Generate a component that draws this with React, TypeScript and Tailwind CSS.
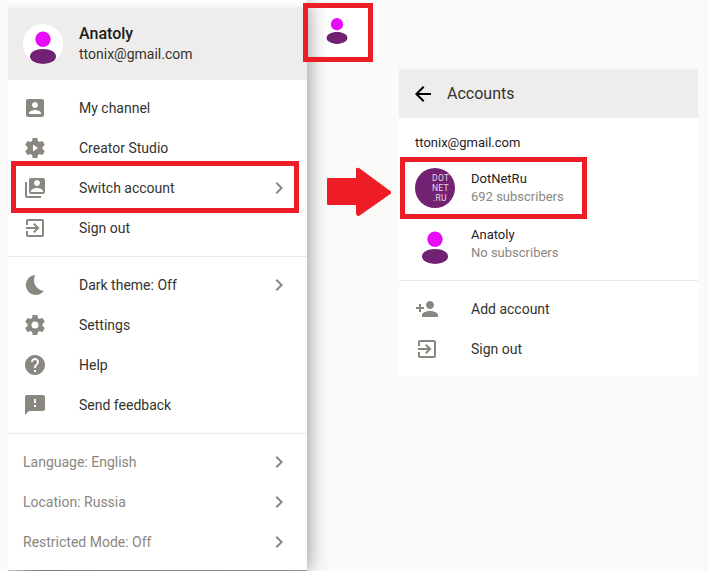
import React from "react";

const GEAR =
  "M19.43 12.98c.04-.32.07-.64.07-.98s-.03-.66-.07-.98l2.11-1.65c.19-.15.24-.42.12-.64l-2-3.46c-.12-.22-.39-.3-.61-.22l-2.49 1c-.52-.4-1.08-.73-1.69-.98l-.38-2.65C14.46 2.18 14.25 2 14 2h-4c-.25 0-.46.18-.49.42l-.38 2.65c-.61.25-1.17.59-1.69.98l-2.49-1c-.23-.09-.49 0-.61.22l-2 3.46c-.13.22-.07.49.12.64l2.11 1.65c-.04.32-.07.65-.07.98s.03.66.07.98l-2.11 1.65c-.19.15-.24.42-.12.64l2 3.46c.12.22.39.3.61.22l2.49-1c.52.4 1.08.73 1.69.98l.38 2.65c.03.24.24.42.49.42h4c.25 0 .46-.18.49-.42l.38-2.65c.61-.25 1.17-.59 1.69-.98l2.49 1c.23.09.49 0 .61-.22l2-3.46c.12-.22.07-.49-.12-.64l-2.11-1.65z";

const icons = {
  channel:
    "M3 5v14c0 1.1.89 2 2 2h14c1.1 0 2-.9 2-2V5c0-1.1-.9-2-2-2H5c-1.11 0-2 .9-2 2zm12 4c0 1.66-1.34 3-3 3s-3-1.34-3-3 1.34-3 3-3 3 1.34 3 3zm-9 8c0-2 4-3.1 6-3.1s6 1.1 6 3.1v1H6v-1z",
  studio: GEAR + "M10 8.5v7l5-3.5z",
  accounts:
    "M4 6H2v14c0 1.1.9 2 2 2h14v-2H4V6zM20 2H8c-1.1 0-2 .9-2 2v12c0 1.1.9 2 2 2h12c1.1 0 2-.9 2-2V4c0-1.1-.9-2-2-2zm-6 2c1.66 0 3 1.34 3 3s-1.34 3-3 3-3-1.34-3-3 1.34-3 3-3zm6 12H8v-1c0-2 4-3.1 6-3.1s6 1.1 6 3.1v1z",
  exit: "M10.09 15.59L11.5 17l5-5-5-5-1.41 1.41L12.67 11H3v2h9.67l-2.58 2.59zM19 3H5c-1.11 0-2 .9-2 2v4h2V5h14v14H5v-4H3v4c0 1.1.89 2 2 2h14c1.1 0 2-.9 2-2V5c0-1.1-.9-2-2-2z",
  moon: "M12.3 2A10 10 0 1 0 21 17.8A10.6 10.6 0 0 1 12.3 2z",
  settings: GEAR + "M12 15.5a3.5 3.5 0 1 1 0-7 3.5 3.5 0 0 1 0 7z",
  help: "M12 2C6.48 2 2 6.48 2 12s4.48 10 10 10 10-4.48 10-10S17.52 2 12 2zm1 17h-2v-2h2v2zm2.07-7.75l-.9.92C13.45 12.9 13 13.5 13 15h-2v-.5c0-1.1.45-2.1 1.17-2.83l1.24-1.26c.37-.36.59-.86.59-1.41 0-1.1-.9-2-2-2s-2 .9-2 2H8c0-2.21 1.79-4 4-4s4 1.79 4 4c0 .88-.36 1.68-.93 2.25z",
  feedback:
    "M20 2H4c-1.1 0-1.99.9-1.99 2L2 22l4-4h14c1.1 0 2-.9 2-2V4c0-1.1-.9-2-2-2zm-7 12h-2v-2h2v2zm0-4h-2V6h2v4z",
  chevron: "M10 6L8.59 7.41 13.17 12l-4.58 4.59L10 18l6-6z",
  back: "M20 11H7.83l5.59-5.59L12 4l-8 8 8 8 1.41-1.41L7.83 13H20v-2z",
  addPerson:
    "M15 12c2.21 0 4-1.79 4-4s-1.79-4-4-4-4 1.79-4 4 1.79 4 4 4zm-9-2V7H4v3H1v2h3v3h2v-3h3v-2H6zm9 4c-2.67 0-8 1.34-8 4v2h16v-2c0-2.66-5.33-4-8-4z",
};

type IconName = keyof typeof icons;

function Icon({ name, className = "text-[#8a8680]" }: { name: IconName; className?: string }) {
  return (
    <svg viewBox="0 0 24 24" className={`size-6 shrink-0 ${className}`} fill="currentColor" fillRule="evenodd">
      <path d={icons[name]} />
    </svg>
  );
}

function Avatar({ className }: { className: string }) {
  return (
    <svg viewBox="0 0 40 40" className={`shrink-0 rounded-full ${className}`}>
      <circle cx="20" cy="15.300" r="7.700" fill="#e60cf8" />
      <path d="M7 32.500c0-4.500 5.500-7.500 13-7.500s13 3 13 7.500-5.500 7.500-13 7.500-13-3-13-7.500z" fill="#722272" />
    </svg>
  );
}

function Item({ icon, label, arrow }: { icon?: IconName; label: string; arrow?: boolean }) {
  return (
    <div className="flex h-10 items-center pr-4 pl-[15px]">
      {icon && (
        <div className="w-14 shrink-0">
          <Icon name={icon} />
        </div>
      )}
      <span className={`flex-1 ${icon ? "text-[#35332e]" : "text-[#8a8680]"}`}>{label}</span>
      {arrow && <Icon name="chevron" />}
    </div>
  );
}

function Account({ avatar, name, detail }: { avatar: React.ReactNode; name: string; detail: string }) {
  return (
    <div className="flex h-14 items-center gap-4 pl-4 text-[13px] leading-[18px]">
      {avatar}
      <div>
        <div className="text-[#24221e]">{name}</div>
        <div className="text-[#8a8680]">{detail}</div>
      </div>
    </div>
  );
}

export default function App() {
  return (
    <div className="relative flex h-[571px] w-[708px] overflow-hidden bg-[#fafaf8] pl-2 font-[Roboto,sans-serif] text-sm">
      <div className="flex h-full w-[371px] shrink-0 items-start overflow-hidden bg-[linear-gradient(#fff_56px,#f7f7f6_56px,#fafaf8_62px)]">
        <div className="z-10 flex h-full w-[299px] shrink-0 flex-col shadow-[0_0_20px_rgba(0,0,0,0.45)]">
          <div className="h-2 bg-linear-to-b from-white via-[#fbfbfb] to-[#f0f0ef]" />
          <header className="flex h-[72px] items-center gap-4 bg-[#eeedeb] pl-[15px]">
            <Avatar className="size-10 bg-white" />
            <div>
              <div className="text-base leading-5 font-medium text-[#1c1b19]">Anatoly</div>
              <div className="leading-5 text-[#35332e]">ttonix@gmail.com</div>
            </div>
          </header>
          <section className="border-b border-[#ebebea] bg-white py-2">
            <Item icon="channel" label="My channel" />
            <Item icon="studio" label="Creator Studio" />
            <Item icon="accounts" label="Switch account" arrow />
            <Item icon="exit" label="Sign out" />
          </section>
          <section className="border-b border-[#ebebea] bg-white py-2">
            <Item icon="moon" label="Dark theme: Off" arrow />
            <Item icon="settings" label="Settings" />
            <Item icon="help" label="Help" />
            <Item icon="feedback" label="Send feedback" />
          </section>
          <section className="bg-white py-2">
            <Item label="Language: English" arrow />
            <Item label="Location: Russia" arrow />
            <Item label="Restricted Mode: Off" arrow />
          </section>
          <div className="h-px bg-linear-to-r from-[#c4c4c2] via-[#7c7a7a] via-10% to-[#949292]" />
        </div>
        <Avatar className="mt-3 ml-[14px] size-8" />
      </div>

      <div className="mt-[67px] ml-5 h-[309px] w-[299px] shrink-0 bg-white">
        <div className="h-[3px] bg-[#f5f5f4]" />
        <header className="flex h-12 items-center gap-3 bg-[#eeedeb] pl-3 text-base text-[#35332e]">
          <Icon name="back" className="text-black" />
          Accounts
        </header>
        <section className="border-b border-[#e8e8e7] pt-[15px] pb-2">
          <div className="h-[27px] pl-4 text-[13px] leading-5 text-[#24221e]">ttonix@gmail.com</div>
          <Account
            avatar={
              <div className="size-10 rounded-full bg-[#722272] pt-[5px] pl-[17px] text-[8.5px] leading-[10px] tracking-[0.3px] text-[#e6d9e6]">
                <div>DOT</div>
                <div>NET</div>
                <div className="pl-px">.RU</div>
              </div>
            }
            name="DotNetRu"
            detail="692 subscribers"
          />
          <Account avatar={<Avatar className="size-10" />} name="Anatoly" detail="No subscribers" />
        </section>
        <section className="pt-2 pl-px">
          <Item icon="addPerson" label="Add account" />
          <Item icon="exit" label="Sign out" />
        </section>
      </div>

      <div className="absolute top-[3px] left-[303px] z-20 h-[59px] w-[70px] border-5 border-[#ee1c24]" />
      <div className="absolute top-[161px] left-[11px] z-20 h-[52px] w-[288px] border-5 border-[#ee1c24]" />
      <div className="absolute top-[157px] left-[400px] z-20 h-[62px] w-[187px] border-5 border-[#ee1c24]" />
      <svg viewBox="0 0 64 49" className="absolute top-[167px] left-[327px] z-20 h-[49px] w-16">
        <path d="M1 11h28V2q0-2 3-1l32 23.500v2L32 49q-3 0-3-3V38H1q-1 0-1-1V12q0-1 1-1z" fill="#ee1c24" />
      </svg>
    </div>
  );
}
